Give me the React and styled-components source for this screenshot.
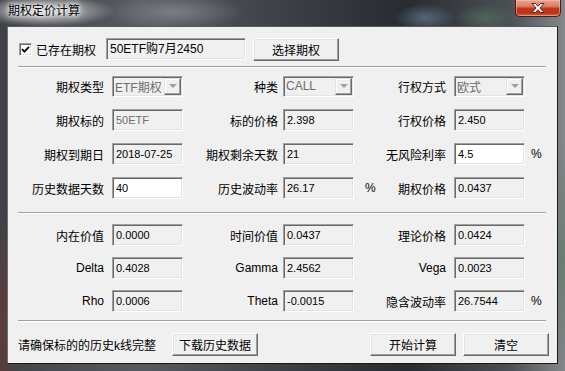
import React from 'react'
import styled, { createGlobalStyle } from 'styled-components'

const GlobalStyle = createGlobalStyle`
  html, body {
    margin: 0;
    padding: 0;
  }
  body {
    width: 565px;
    height: 371px;
    overflow: hidden;
    font-family: "Liberation Sans", "Noto Sans CJK SC", sans-serif;
    font-size: 12px;
    color: #000;
  }
`

const Window = styled.div`
  width: 565px;
  height: 371px;
  box-sizing: border-box;
  display: flex;
  flex-direction: column;
  padding: 0 7px 7px 7px;
  background:
    radial-gradient(ellipse 70px 16px at 45px 11px, rgba(235, 236, 238, 0.9), rgba(235, 236, 238, 0) 100%),
    radial-gradient(ellipse 70px 18px at 175px 12px, rgba(150, 154, 160, 0.6), rgba(150, 154, 160, 0) 100%),
    radial-gradient(ellipse 30px 14px at 425px 18px, rgba(95, 115, 140, 0.8), rgba(95, 115, 140, 0) 100%),
    radial-gradient(ellipse 30px 14px at 485px 18px, rgba(85, 115, 95, 0.7), rgba(85, 115, 95, 0) 100%),
    radial-gradient(ellipse 16px 120px at 3px 330px, rgba(110, 55, 55, 0.7), rgba(110, 55, 55, 0) 100%),
    radial-gradient(ellipse 14px 120px at 562px 260px, rgba(95, 120, 105, 0.7), rgba(95, 120, 105, 0) 100%),
    linear-gradient(90deg, #3f4247 0%, #575b60 25%, #383c41 55%, #282c31 72%, #4a4f54 90%, #85888b 100%);
`

const TitleBar = styled.div`
  height: 26px;
  flex: none;
  display: flex;
  justify-content: space-between;
  align-items: flex-start;
`

const Title = styled.div`
  padding: 4px 0 0 1px;
  font-size: 12px;
  line-height: 14px;
  color: #000;
  text-shadow: 0 0 6px #fff, 0 0 3px #fff, 0 0 10px rgba(255, 255, 255, 0.8);
`

const CloseButton = styled.div`
  width: 46px;
  height: 17px;
  margin-right: -3px;
  box-sizing: border-box;
  border: 1px solid #4a1e16;
  border-top: none;
  border-radius: 0 0 5px 5px;
  background: linear-gradient(180deg, #e9a493 0%, #dc7c65 40%, #c1391d 52%, #b83217 80%, #d2654a 100%);
  box-shadow: inset 0 0 0 1px rgba(255, 200, 180, 0.5);
  display: flex;
  align-items: center;
  justify-content: center;
`

const Client = styled.div`
  flex: 1;
  display: flex;
  flex-direction: column;
  background: #f0f0f0;
  border: 1px solid;
  border-color: #5a5a5a #1a1a1a #1a1a1a #707070;
`

const TopRow = styled.div`
  display: flex;
  align-items: center;
  height: 24px;
  padding: 10px 0 0 11px;
`

const CheckBox = styled.span`
  width: 13px;
  height: 13px;
  box-sizing: border-box;
  background: #fff;
  border: 1px solid;
  border-color: #a0a0a0 #fff #fff #a0a0a0;
  box-shadow: inset 1px 1px #696969, inset -1px -1px #e3e3e3;
  display: flex;
  align-items: center;
  justify-content: center;
`

const CheckLabel = styled.span`
  width: 70px;
  margin-left: 4px;
  font-size: 12px;
`

const Separator = styled.div`
  height: 0;
  margin: ${p => p.$top}px 11px 0 10px;
  border-top: 1px solid #a0a0a0;
  border-bottom: 1px solid #fff;
`

const FieldGrid = styled.div`
  display: grid;
  grid-template-columns: 94px 71px 17px 83px 71px 21px 79px 71px 21px;
  grid-auto-rows: 22px;
  row-gap: ${p => p.$gap}px;
  padding: ${p => p.$top}px 0 0 10px;
  align-items: center;
`

const Label = styled.div`
  text-align: right;
  padding-right: ${p => p.$pr}px;
  white-space: nowrap;
  font-size: 12px;
`

const Unit = styled.div`
  padding-left: ${p => p.$pl}px;
  font-size: 12px;
`

const Box = styled.div`
  width: ${p => p.$w || 71}px;
  height: 22px;
  box-sizing: border-box;
  padding: 0 2px 0 3px;
  border: 1px solid;
  border-color: #a0a0a0 #fff #fff #a0a0a0;
  box-shadow: inset 1px 1px #696969, inset -1px -1px #e3e3e3;
  background: ${p => (p.$editable ? '#fff' : '#f0f0f0')};
  color: ${p => (p.$disabled ? '#6d6d6d' : '#000')};
  font-size: ${p => p.$fs || 11}px;
  line-height: 20px;
  white-space: nowrap;
  overflow: hidden;
`

const Combo = styled.div`
  width: 71px;
  height: 21px;
  box-sizing: border-box;
  display: flex;
  align-items: center;
  justify-content: space-between;
  padding: 1px 1px 1px 2px;
  border: 1px solid;
  border-color: #a0a0a0 #fff #fff #a0a0a0;
  box-shadow: inset 1px 1px #696969, inset -1px -1px #e3e3e3;
  background: #f0f0f0;
  color: #6d6d6d;
  font-size: 12px;
  white-space: nowrap;
`

const DropButton = styled.span`
  width: 17px;
  height: 17px;
  box-sizing: border-box;
  border: 1px solid;
  border-color: #e3e3e3 #696969 #696969 #e3e3e3;
  box-shadow: inset -1px -1px #a0a0a0, inset 1px 1px #fff;
  background: #f0f0f0;
  display: flex;
  align-items: center;
  justify-content: center;
  &::after {
    content: '';
    border-left: 4px solid transparent;
    border-right: 4px solid transparent;
    border-top: 4px solid #a0a0a0;
  }
`

const Button = styled.button`
  width: 86px;
  height: 23px;
  box-sizing: border-box;
  margin: 0;
  margin-left: ${p => p.$ml || 0}px;
  padding: 0;
  border: 1px solid;
  border-color: #fff #696969 #696969 #fff;
  box-shadow: inset -1px -1px #a0a0a0, inset 1px 1px #e3e3e3;
  background: #f0f0f0;
  font-family: "Liberation Sans", "Noto Sans CJK SC", sans-serif;
  font-size: 12px;
  color: #000;
`

const BottomRow = styled.div`
  display: flex;
  align-items: center;
  padding: 11px 8px 0 10px;
`

const Hint = styled.span`
  font-size: 12px;
`

const Spacer = styled.div`
  flex: 1;
`

const topFields = [
  [
    { label: '期权类型', combo: 'ETF期权' },
    { label: '种类', combo: 'CALL' },
    { label: '行权方式', combo: '欧式' },
  ],
  [
    { label: '期权标的', value: '50ETF', disabled: true },
    { label: '标的价格', value: '2.398' },
    { label: '行权价格', value: '2.450' },
  ],
  [
    { label: '期权到期日', value: '2018-07-25' },
    { label: '期权剩余天数', value: '21' },
    { label: '无风险利率', value: '4.5', editable: true, unit: '%' },
  ],
  [
    { label: '历史数据天数', value: '40', editable: true },
    { label: '历史波动率', value: '26.17', unit: '%' },
    { label: '期权价格', value: '0.0437' },
  ],
]

const resultFields = [
  [
    { label: '内在价值', value: '0.0000' },
    { label: '时间价值', value: '0.0437' },
    { label: '理论价格', value: '0.0424' },
  ],
  [
    { label: 'Delta', value: '0.4028' },
    { label: 'Gamma', value: '2.4562' },
    { label: 'Vega', value: '0.0023' },
  ],
  [
    { label: 'Rho', value: '0.0006' },
    { label: 'Theta', value: '-0.0015' },
    { label: '隐含波动率', value: '26.7544', unit: '%' },
  ],
]

const labelPad = [8, 5, 8]
const unitPad = [0, 11, 6]

function renderRows(rows) {
  return rows.map((row, r) =>
    row.map((f, c) => (
      <React.Fragment key={`${r}-${c}`}>
        <Label $pr={labelPad[c]}>{f.label}</Label>
        {f.combo ? (
          <Combo>
            <span>{f.combo}</span>
            <DropButton />
          </Combo>
        ) : (
          <Box $editable={f.editable} $disabled={f.disabled}>{f.value}</Box>
        )}
        <Unit $pl={unitPad[c]}>{f.unit || ''}</Unit>
      </React.Fragment>
    ))
  )
}

export default function App() {
  return (
    <>
      <GlobalStyle />
      <Window>
        <TitleBar>
          <Title>期权定价计算</Title>
          <CloseButton>
            <svg width="16" height="12" viewBox="0 0 16 12">
              <path
                d="M2 1.5h3.6L8 4.3l2.4-2.8H14L9.9 6 14 10.5h-3.6L8 7.7l-2.4 2.8H2L6.1 6z"
                fill="#fff"
                stroke="#4b2a24"
                strokeWidth="1"
              />
            </svg>
          </CloseButton>
        </TitleBar>
        <Client>
          <TopRow>
            <CheckBox>
              <svg width="9" height="9" viewBox="0 0 9 9">
                <path d="M1 4.2l2.4 2.4L8 1.8" fill="none" stroke="#000" strokeWidth="1.8" />
              </svg>
            </CheckBox>
            <CheckLabel>已存在期权</CheckLabel>
            <Box $w={140} $fs={12}>50ETF购7月2450</Box>
            <Button $ml={7}>选择期权</Button>
          </TopRow>
          <Separator $top={5} />
          <FieldGrid $top={7} $gap={12}>
            {renderRows(topFields)}
          </FieldGrid>
          <Separator $top={13} />
          <FieldGrid $top={10} $gap={11}>
            {renderRows(resultFields)}
          </FieldGrid>
          <Separator $top={8} />
          <BottomRow>
            <Hint>请确保标的的历史k线完整</Hint>
            <Button $ml={16}>下载历史数据</Button>
            <Spacer />
            <Button>开始计算</Button>
            <Button $ml={7}>清空</Button>
          </BottomRow>
        </Client>
      </Window>
    </>
  )
}
